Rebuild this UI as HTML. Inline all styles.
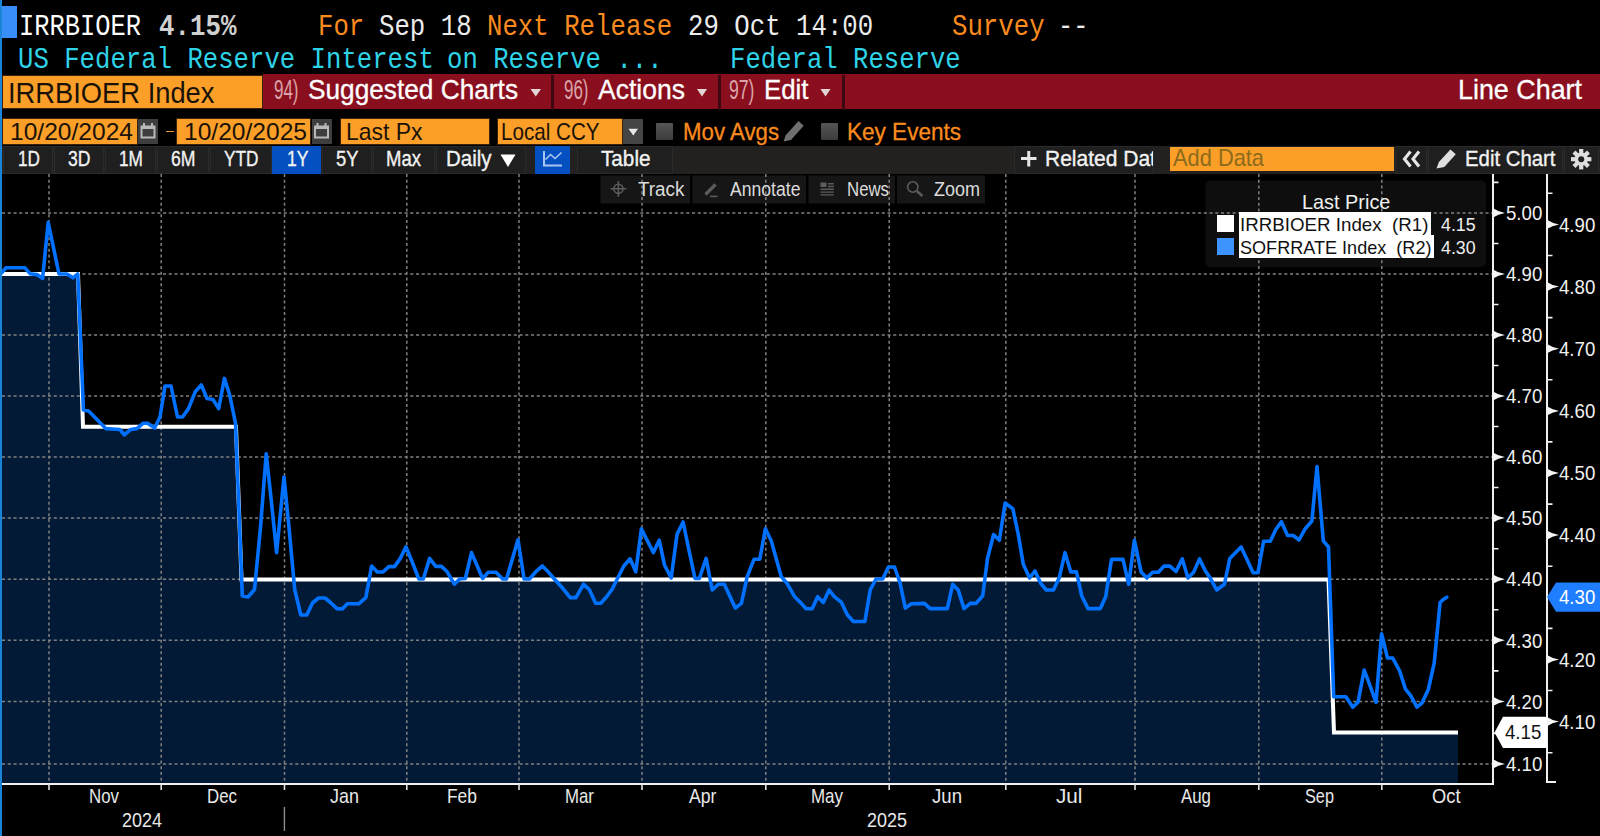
<!DOCTYPE html>
<html lang="en"><head><meta charset="utf-8"><title>IRRBIOER Index - Line Chart</title>
<style>
html,body{margin:0;padding:0;background:#000;}
body{width:1600px;height:836px;overflow:hidden;position:relative;font-family:"Liberation Sans", Arial, sans-serif;}
.abs,.t,.chart{position:absolute;}
.t{white-space:pre;line-height:1;transform-origin:0 0;}
.ts{font-family:"Liberation Sans", Arial, sans-serif;}
.tm{font-family:"Liberation Mono", monospace;}
.chart{left:0;top:0;}
.or{background:#fb9f28;box-shadow:0 0 0 1px #3c2206;}
.sep{background:#3d0810;width:3px;top:75px;height:35px;}
.gbox{background:#3e3e3e;}
.cb{background:linear-gradient(#555,#3c3c3c);width:17px;height:17px;border-radius:1px;}
.btn{background:#1f1f1f;box-shadow:inset 0 0 0 1px #2b2b2b;top:146px;height:28px;}
.cbtn{background:#161616;top:175.5px;height:28px;}
</style></head><body>
<!-- chart -->
<svg class="chart" width="1600" height="836" viewBox="0 0 1600 836">
<path d="M0.0,274.0 L78.0,274.0 L83.0,426.8 L236.0,426.8 L241.5,579.4 L1328.5,579.4 L1334.0,732.6 L1458.0,732.6 L1458.0,783.0 L0.0,783.0 Z" fill="#021a35"/>
<rect x="1205.5" y="180.5" width="280.5" height="86.5" rx="5" fill="#0e0e0e"/>
<g fill="#161616"><rect x="600.5" y="175.5" width="89.5" height="28"/><rect x="692.5" y="175.5" width="113.5" height="28"/><rect x="808.5" y="175.5" width="86.5" height="28"/><rect x="897" y="175.5" width="88" height="28"/></g>
<path d="M2,212.9 H1493 M2,274.0 H1493 M2,335.0 H1493 M2,396.0 H1493 M2,457.0 H1493 M2,518.0 H1493 M2,579.2 H1493 M2,640.2 H1493 M2,701.4 H1493 M2,763.9 H1493 M49.0,174 V783 M161.2,174 V783 M284.5,174 V783 M406.8,174 V783 M519.0,174 V783 M642.0,174 V783 M765.8,174 V783 M889.2,174 V783 M1005.8,174 V783 M1135.0,174 V783 M1258.8,174 V783 M1381.8,174 V783" stroke="#808080" stroke-width="1.5" stroke-dasharray="3.1 2.65" fill="none"/>
<path d="M0.0,274.0 L78.0,274.0 L83.0,426.8 L236.0,426.8 L241.5,579.4 L1328.5,579.4 L1334.0,732.6 L1458.0,732.6" stroke="#fff" stroke-width="4" fill="none" stroke-linejoin="miter"/>
<path d="M0.0,274.6 L6.0,267.8 L25.0,267.8 L30.0,273.7 L37.0,274.6 L42.6,278.4 L48.2,222.4 L59.0,274.0 L67.0,274.0 L73.0,277.8 L77.8,274.0 L83.4,410.0 L88.6,411.0 L105.8,428.6 L119.8,429.5 L124.4,434.8 L130.6,429.5 L136.9,428.6 L143.0,423.3 L147.7,423.3 L154.6,428.0 L160.0,417.0 L165.0,386.0 L171.0,386.0 L177.5,417.0 L182.5,417.0 L188.5,408.6 L195.2,391.8 L201.3,385.0 L207.0,398.5 L213.0,399.5 L218.7,408.6 L224.4,378.4 L229.7,395.0 L235.6,423.7 L242.3,596.0 L248.0,597.0 L254.5,589.5 L260.5,527.5 L266.2,453.8 L271.3,500.7 L276.6,552.6 L284.0,477.0 L289.0,527.5 L294.7,589.5 L300.8,615.0 L306.8,615.0 L312.5,603.0 L318.5,598.0 L325.0,598.0 L331.0,603.0 L337.0,608.6 L342.3,609.0 L347.3,603.7 L359.0,603.7 L365.8,597.6 L368.7,582.3 L371.6,566.0 L377.3,572.0 L383.0,572.0 L388.8,566.6 L394.5,566.6 L400.3,558.4 L406.0,546.9 L411.8,561.0 L418.9,579.0 L423.3,579.0 L429.6,558.4 L435.7,566.4 L441.4,566.4 L447.2,571.8 L454.3,584.2 L459.6,579.0 L465.4,578.5 L471.5,552.6 L476.8,565.0 L482.6,578.5 L488.3,572.3 L496.0,572.3 L502.7,579.0 L506.5,579.0 L518.0,539.8 L524.1,579.0 L529.5,579.0 L536.7,570.8 L542.4,566.0 L548.2,571.8 L553.9,578.5 L562.5,588.0 L570.2,597.6 L575.9,597.6 L583.6,584.2 L589.3,589.6 L595.6,603.3 L600.8,603.3 L606.6,596.7 L612.3,589.0 L618.0,577.5 L623.8,566.0 L630.1,558.8 L635.8,571.8 L641.4,528.7 L647.1,540.2 L653.4,552.6 L659.2,540.2 L664.5,565.0 L671.2,578.0 L677.0,534.4 L683.1,522.0 L688.9,549.8 L695.0,578.5 L699.4,578.5 L706.1,558.4 L712.2,590.0 L718.5,584.2 L724.3,584.2 L735.3,608.1 L741.4,603.3 L747.2,576.6 L754.0,559.3 L759.8,559.3 L765.4,528.7 L771.3,541.1 L781.2,576.6 L787.0,583.3 L794.6,596.7 L800.4,602.4 L806.1,608.7 L812.2,608.7 L817.6,596.7 L823.3,602.4 L829.1,590.0 L834.3,596.7 L841.5,602.4 L847.3,614.8 L853.4,621.5 L864.9,621.5 L870.2,590.0 L876.0,579.0 L882.7,579.0 L888.4,567.0 L894.5,567.0 L899.9,582.3 L905.3,608.1 L911.4,603.7 L924.4,603.4 L930.1,608.6 L947.3,608.6 L952.7,584.3 L958.2,590.0 L964.0,608.6 L970.3,603.4 L976.0,603.4 L982.7,595.8 L987.5,558.5 L993.6,534.5 L999.4,540.3 L1005.1,503.0 L1012.8,508.7 L1018.1,533.6 L1023.3,564.2 L1029.6,578.0 L1035.0,570.9 L1040.7,583.3 L1046.3,590.0 L1053.5,590.0 L1059.3,577.6 L1065.0,552.7 L1070.8,571.9 L1076.5,571.9 L1081.7,595.8 L1088.0,608.6 L1100.4,608.6 L1105.7,596.7 L1111.5,559.4 L1123.0,559.4 L1128.7,584.3 L1134.4,540.3 L1141.1,571.9 L1146.9,578.0 L1152.6,572.2 L1158.4,572.2 L1164.1,566.1 L1169.9,566.1 L1176.0,571.5 L1182.3,558.9 L1188.0,578.0 L1193.8,571.9 L1199.5,558.9 L1205.3,570.9 L1210.0,577.6 L1216.7,590.0 L1224.4,584.3 L1229.8,558.5 L1241.1,547.0 L1247.0,559.4 L1253.1,572.8 L1257.9,572.8 L1263.6,541.2 L1270.3,541.2 L1275.7,529.8 L1281.4,521.7 L1287.6,535.5 L1293.3,535.5 L1299.0,540.0 L1305.0,529.0 L1311.9,521.0 L1317.0,466.6 L1323.3,540.8 L1328.5,547.0 L1333.7,696.8 L1345.9,696.8 L1352.8,707.2 L1358.0,702.3 L1364.2,670.0 L1370.0,685.7 L1376.0,702.3 L1381.6,633.7 L1387.5,658.0 L1392.7,658.0 L1399.6,670.8 L1405.5,689.2 L1411.0,696.0 L1416.9,707.2 L1422.0,703.0 L1428.4,689.2 L1434.2,663.2 L1440.1,602.5 L1442.9,599.7 L1446.8,597.2" stroke="#0070ff" stroke-width="3.6" fill="none" stroke-linejoin="round" stroke-linecap="round"/>
<path d="M0,784 H1494 M1493,174 V785 M1547,174 V782 H1556" stroke="#f0f0f0" stroke-width="2" fill="none"/>
<path d="M49.0,784 V790 M161.2,784 V790 M284.5,784 V790 M406.8,784 V790 M519.0,784 V790 M642.0,784 V790 M765.8,784 V790 M889.2,784 V790 M1005.8,784 V790 M1135.0,784 V790 M1258.8,784 V790 M1381.8,784 V790" stroke="#e0e0e0" stroke-width="1.6"/>
<path d="M284.4,807 V831" stroke="#8a8a8a" stroke-width="1.4"/>
<path d="M1493,182.4 H1498.5 M1493,243.5 H1498.5 M1493,304.5 H1498.5 M1493,365.5 H1498.5 M1493,426.5 H1498.5 M1493,487.5 H1498.5 M1493,548.7 H1498.5 M1493,609.7 H1498.5 M1493,670.9 H1498.5 M1493,733.4 H1498.5 M1547,193.3 H1552.5 M1547,255.5 H1552.5 M1547,317.6 H1552.5 M1547,379.8 H1552.5 M1547,441.9 H1552.5 M1547,504.1 H1552.5 M1547,566.2 H1552.5 M1547,628.4 H1552.5 M1547,690.5 H1552.5 M1547,752.7 H1552.5" stroke="#f0f0f0" stroke-width="1.6"/>
<path d="M1493,208.3 Q1498,211.7 1505,212.9 Q1498,214.1 1493,217.5 Z M1493,269.4 Q1498,272.8 1505,274.0 Q1498,275.2 1493,278.6 Z M1493,330.4 Q1498,333.8 1505,335.0 Q1498,336.2 1493,339.6 Z M1493,391.4 Q1498,394.8 1505,396.0 Q1498,397.2 1493,400.6 Z M1493,452.4 Q1498,455.8 1505,457.0 Q1498,458.2 1493,461.6 Z M1493,513.4 Q1498,516.8 1505,518.0 Q1498,519.2 1493,522.6 Z M1493,574.6 Q1498,578.0 1505,579.2 Q1498,580.4 1493,583.8 Z M1493,635.6 Q1498,639.0 1505,640.2 Q1498,641.5 1493,644.9 Z M1493,696.8 Q1498,700.2 1505,701.4 Q1498,702.6 1493,706.0 Z M1493,759.3 Q1498,762.7 1505,763.9 Q1498,765.1 1493,768.5 Z M1547,219.8 Q1552,223.2 1559,224.4 Q1552,225.6 1547,229.0 Z M1547,281.9 Q1552,285.4 1559,286.6 Q1552,287.8 1547,291.2 Z M1547,344.1 Q1552,347.5 1559,348.7 Q1552,349.9 1547,353.3 Z M1547,406.2 Q1552,409.7 1559,410.9 Q1552,412.1 1547,415.5 Z M1547,468.4 Q1552,471.8 1559,473.0 Q1552,474.2 1547,477.6 Z M1547,530.5 Q1552,533.9 1559,535.1 Q1552,536.4 1547,539.8 Z M1547,654.9 Q1552,658.2 1559,659.5 Q1552,660.7 1547,664.1 Z M1547,717.0 Q1552,720.4 1559,721.6 Q1552,722.8 1547,726.2 Z" fill="#f4f4f4"/>
<path d="M1547,597 L1556,582.5 H1600 V611.7 H1556 Z" fill="#1f7dff"/>
<path d="M1494.5,732.5 L1503,716.7 H1545.5 Q1547,716.7 1547,718.2 V746.5 Q1547,748 1545.5,748 H1503 Z" fill="#fff"/>
</svg>
<!-- left window edge + cursor block -->
<div class="abs" style="left:0;top:0;width:2px;height:836px;background:#1b84d9"></div>
<div class="abs" style="left:2px;top:6px;width:14.5px;height:32px;background:#3a8ef8"></div>
<!-- red command bar -->
<div class="abs" style="left:262.5px;top:74.2px;width:1337.5px;height:35.3px;background:#8a0f1e"></div>
<div class="abs or" style="left:3px;top:76px;width:258.5px;height:31.5px"></div>
<div class="abs sep" style="left:551px"></div><div class="abs sep" style="left:717.5px"></div><div class="abs sep" style="left:841.5px"></div>
<svg class="abs" style="left:0;top:0" width="1600" height="180" viewBox="0 0 1600 180">
<path d="M530.5,89 h10.5 l-5.25,7.5z M697,89 h10 l-5,7.5z M820.5,89 h10 l-5,7.5z" fill="#e2d5d6"/>
</svg>
<!-- row 4 inputs -->
<div class="abs or" style="left:3px;top:118.7px;width:133.5px;height:25.3px"></div>
<div class="abs gbox" style="left:138px;top:119px;width:20px;height:25px"></div>
<div class="abs" style="left:165.5px;top:130.7px;width:8px;height:1.8px;background:#f0962a"></div>
<div class="abs or" style="left:176.5px;top:118.7px;width:133.5px;height:25.3px"></div>
<div class="abs gbox" style="left:311.5px;top:119px;width:20px;height:25px"></div>
<div class="abs or" style="left:341px;top:118.7px;width:147.5px;height:25.3px"></div>
<div class="abs or" style="left:498px;top:118.7px;width:124px;height:25.3px"></div>
<div class="abs gbox" style="left:623px;top:119px;width:20px;height:25px;background:#454545"></div>
<div class="abs cb" style="left:656px;top:122.5px"></div>
<div class="abs cb" style="left:820.5px;top:122.5px"></div>
<svg class="abs" style="left:0;top:110px" width="1600" height="40" viewBox="0 110 1600 40">
<g fill="none" stroke="#b8b8b8" stroke-width="2"><rect x="141.5" y="126.5" width="13" height="11"/><path d="M144,123 v4 M152,123 v4"/><rect x="315" y="126.5" width="13" height="11"/><path d="M317.5,123 v4 M325.5,123 v4"/></g>
<path d="M141,126 h14 v3 h-14z M314.5,126 h14 v3 h-14z" fill="#b8b8b8"/>
<path d="M628.5,128.8 h9.5 l-4.75,6.6z" fill="#e8e8e8"/>
<path d="M783.5,141.5 l2.2,-6.2 l12.8,-14.2 l5.2,4.6 l-12.8,14.2 z" fill="#6f6f6f"/>
</svg>
<!-- toolbar row 5 -->
<div class="abs" style="left:2px;top:145.5px;width:1598px;height:28.5px;background:#232120"></div>
<div class="abs btn" style="left:3px;width:50px"></div>
<div class="abs btn" style="left:54px;width:50px"></div>
<div class="abs btn" style="left:105px;width:51px"></div>
<div class="abs btn" style="left:157px;width:51.5px"></div>
<div class="abs btn" style="left:209.5px;width:62px"></div>
<div class="abs btn" style="left:272px;width:49px;background:#0450c1;box-shadow:none"></div>
<div class="abs btn" style="left:322px;width:50px"></div>
<div class="abs btn" style="left:373px;width:62px"></div>
<div class="abs btn" style="left:436px;width:89.5px"></div>
<div class="abs btn" style="left:535px;width:35px;background:#0450c1;box-shadow:none"></div>
<div class="abs btn" style="left:577px;width:96px"></div>
<div class="abs btn" style="left:1014px;width:139.5px"></div>
<div class="abs" style="left:1169.5px;top:147px;width:224px;height:24px;background:#fb9f28"></div>
<div class="abs btn" style="left:1395px;width:32px"></div>
<div class="abs btn" style="left:1428px;width:134.5px"></div>
<div class="abs btn" style="left:1563.5px;width:35.5px"></div>
<div class="abs" style="left:1044.5px;top:146px;width:108.5px;height:28px;overflow:hidden"><span class="t ts" style="left:0;top:1.9px;font-size:22px;color:#f2f2f2;-webkit-text-stroke:0.35px #f2f2f2;transform:scaleX(0.955)">Related Data</span></div>
<svg class="abs" style="left:0;top:140px" width="1600" height="40" viewBox="0 140 1600 40">
<path d="M500.5,154.5 h15 l-7.5,12.5z" fill="#fff"/>
<path d="M544,151 V165.5 H562" fill="none" stroke="#a9c6f2" stroke-width="2"/>
<path d="M545.5,159.5 L550.5,154.5 L555,158.5 L561.5,152.5" fill="none" stroke="#a9c6f2" stroke-width="1.6"/>
<path d="M1021,158.5 h15.5 M1028.75,151 v15.5" stroke="#e6e6e6" stroke-width="3" fill="none"/>
<path d="M1410.5,151.5 l-6,7.5 l6,7.5 M1419,151.5 l-6,7.5 l6,7.5" stroke="#e6e6e6" stroke-width="3.1" fill="none"/>
<path d="M1436.5,168.5 l2.4,-6.4 l11.5,-12.6 l5.4,4.8 l-11.5,12.6 z" fill="#dedede"/>
<g transform="translate(1581.2,159.2)" fill="#dedede"><circle r="6.6"/><rect x="-2.1" y="-10.2" width="4.2" height="20.4" transform="rotate(0)"/><rect x="-2.1" y="-10.2" width="4.2" height="20.4" transform="rotate(45)"/><rect x="-2.1" y="-10.2" width="4.2" height="20.4" transform="rotate(90)"/><rect x="-2.1" y="-10.2" width="4.2" height="20.4" transform="rotate(135)"/><circle r="3" fill="#1f1f1f"/></g>
</svg>
<!-- chart toolbar -->
<svg class="abs" style="left:0;top:170px" width="1600" height="40" viewBox="0 170 1600 40">
<g stroke="#5c5c5c" stroke-width="1.6" fill="none"><circle cx="618.4" cy="188.8" r="4.6"/><path d="M610.5,188.8 h15.8 M618.4,181 v15.8"/>
<path d="M705.5,194.5 l10,-10" stroke-width="3.2"/><path d="M710,196.4 h7.6"/>
<circle cx="912.8" cy="187" r="5.2"/><path d="M916.8,191 l5.6,5" stroke-width="2.6"/></g>
<path d="M820.5,182.5 h6 v4.5 h-6z M828,183 h5.8 v1.4 h-5.8z M828,185.8 h5.8 v1.4 h-5.8z M820.5,188.6 h13.3 v1.4 h-13.3z M820.5,191.4 h13.3 v1.4 h-13.3z M820.5,194.2 h13.3 v1.4 h-13.3z" fill="#5c5c5c"/>
</svg>
<!-- legend -->
<div class="abs" style="left:1216.5px;top:214.7px;width:17.3px;height:17.2px;background:#fff"></div>
<div class="abs" style="left:1216.5px;top:237.6px;width:17.3px;height:17.2px;background:#3d94ff"></div>
<div class="abs" style="left:1239px;top:212px;width:192px;height:22.8px;background:#fff"></div>
<div class="abs" style="left:1239px;top:234.8px;width:195px;height:22.8px;background:#fff"></div>
<!-- text -->
<span class="t tm" style="left:19.2px;top:12.0px;font-size:30.3px;color:#fff;transform:scaleX(0.839);">IRRBIOER</span>
<span class="t tm" style="left:159.0px;top:12.0px;font-size:30.3px;color:#d0d0d0;transform:scaleX(0.852);font-weight:bold;">4.15%</span>
<span class="t tm" style="left:317.5px;top:12.0px;font-size:30.3px;color:#fb8b1e;transform:scaleX(0.849);">For</span>
<span class="t tm" style="left:379.3px;top:12.0px;font-size:30.3px;color:#ececec;transform:scaleX(0.849);">Sep 18</span>
<span class="t tm" style="left:487.3px;top:12.0px;font-size:30.3px;color:#fb8b1e;transform:scaleX(0.849);">Next Release</span>
<span class="t tm" style="left:688.1px;top:12.0px;font-size:30.3px;color:#ececec;transform:scaleX(0.849);">29 Oct 14:00</span>
<span class="t tm" style="left:951.5px;top:12.0px;font-size:30.3px;color:#fb8b1e;transform:scaleX(0.849);">Survey</span>
<span class="t tm" style="left:1058.0px;top:12.0px;font-size:30.3px;color:#ececec;transform:scaleX(0.836);">--</span>
<span class="t tm" style="left:18.2px;top:45.0px;font-size:30.3px;color:#2fd3e8;transform:scaleX(0.847);">US Federal Reserve Interest</span>
<span class="t tm" style="left:447.2px;top:45.0px;font-size:30.3px;color:#2fd3e8;transform:scaleX(0.847);">on Reserve ...</span>
<span class="t tm" style="left:730.0px;top:45.0px;font-size:30.3px;color:#2fd3e8;transform:scaleX(0.846);">Federal Reserve</span>
<span class="t ts" style="left:7.8px;top:78.8px;font-size:29px;color:#1a1208;transform:scaleX(0.942);">IRRBIOER Index</span>
<span class="t ts" style="left:273.5px;top:76.2px;font-size:28px;color:#dba3a9;transform:scaleX(0.605);">94)</span>
<span class="t ts" style="left:308.0px;top:76.2px;font-size:28px;color:#fff;transform:scaleX(0.937);-webkit-text-stroke:0.3px #fff;">Suggested Charts</span>
<span class="t ts" style="left:563.5px;top:76.2px;font-size:28px;color:#dba3a9;transform:scaleX(0.605);">96)</span>
<span class="t ts" style="left:597.5px;top:76.2px;font-size:28px;color:#fff;transform:scaleX(0.947);-webkit-text-stroke:0.3px #fff;">Actions</span>
<span class="t ts" style="left:728.5px;top:76.2px;font-size:28px;color:#dba3a9;transform:scaleX(0.630);">97)</span>
<span class="t ts" style="left:763.5px;top:76.2px;font-size:28px;color:#fff;transform:scaleX(0.922);-webkit-text-stroke:0.3px #fff;">Edit</span>
<span class="t ts" style="left:1457.5px;top:76.2px;font-size:28px;color:#fff;transform:scaleX(0.960);-webkit-text-stroke:0.3px #fff;">Line Chart</span>
<span class="t ts" style="left:9.8px;top:119.6px;font-size:24px;color:#1a1208;transform:scaleX(1.024);">10/20/2024</span>
<span class="t ts" style="left:184.3px;top:119.6px;font-size:24px;color:#1a1208;transform:scaleX(1.024);">10/20/2025</span>
<span class="t ts" style="left:345.5px;top:119.6px;font-size:24px;color:#1a1208;transform:scaleX(0.956);">Last Px</span>
<span class="t ts" style="left:501.0px;top:119.6px;font-size:24px;color:#1a1208;transform:scaleX(0.859);">Local CCY</span>
<span class="t ts" style="left:682.5px;top:119.6px;font-size:24px;color:#fb8b1e;transform:scaleX(0.927);-webkit-text-stroke:0.3px #fb8b1e;">Mov Avgs</span>
<span class="t ts" style="left:847.0px;top:119.6px;font-size:24px;color:#fb8b1e;transform:scaleX(0.939);-webkit-text-stroke:0.3px #fb8b1e;">Key Events</span>
<span class="t ts" style="left:17.5px;top:147.9px;font-size:22px;color:#f2f2f2;transform:scaleX(0.782);-webkit-text-stroke:0.35px #f2f2f2;">1D</span>
<span class="t ts" style="left:67.5px;top:147.9px;font-size:22px;color:#f2f2f2;transform:scaleX(0.800);-webkit-text-stroke:0.35px #f2f2f2;">3D</span>
<span class="t ts" style="left:119.0px;top:147.9px;font-size:22px;color:#f2f2f2;transform:scaleX(0.785);-webkit-text-stroke:0.35px #f2f2f2;">1M</span>
<span class="t ts" style="left:171.0px;top:147.9px;font-size:22px;color:#f2f2f2;transform:scaleX(0.802);-webkit-text-stroke:0.35px #f2f2f2;">6M</span>
<span class="t ts" style="left:223.5px;top:147.9px;font-size:22px;color:#f2f2f2;transform:scaleX(0.784);-webkit-text-stroke:0.35px #f2f2f2;">YTD</span>
<span class="t ts" style="left:287.0px;top:147.9px;font-size:22px;color:#f2f2f2;transform:scaleX(0.799);-webkit-text-stroke:0.35px #f2f2f2;">1Y</span>
<span class="t ts" style="left:335.5px;top:147.9px;font-size:22px;color:#f2f2f2;transform:scaleX(0.836);-webkit-text-stroke:0.35px #f2f2f2;">5Y</span>
<span class="t ts" style="left:386.0px;top:147.9px;font-size:22px;color:#f2f2f2;transform:scaleX(0.842);-webkit-text-stroke:0.35px #f2f2f2;">Max</span>
<span class="t ts" style="left:445.5px;top:147.9px;font-size:22px;color:#f2f2f2;transform:scaleX(0.931);-webkit-text-stroke:0.35px #f2f2f2;">Daily</span>
<span class="t ts" style="left:600.5px;top:147.9px;font-size:22px;color:#f2f2f2;transform:scaleX(0.941);-webkit-text-stroke:0.35px #f2f2f2;">Table</span>
<span class="t ts" style="left:1464.5px;top:147.9px;font-size:22px;color:#f2f2f2;transform:scaleX(0.925);-webkit-text-stroke:0.35px #f2f2f2;">Edit Chart</span>
<span class="t ts" style="left:1172.5px;top:147.1px;font-size:23.6px;color:#8c6a1c;transform:scaleX(0.925);">Add Data</span>
<span class="t ts" style="left:638.0px;top:178.6px;font-size:20px;color:#dcdcdc;transform:scaleX(0.944);">Track</span>
<span class="t ts" style="left:730.0px;top:178.6px;font-size:20px;color:#dcdcdc;transform:scaleX(0.880);">Annotate</span>
<span class="t ts" style="left:847.0px;top:178.6px;font-size:20px;color:#dcdcdc;transform:scaleX(0.840);">News</span>
<span class="t ts" style="left:933.5px;top:178.6px;font-size:20px;color:#dcdcdc;transform:scaleX(0.900);">Zoom</span>
<span class="t ts" style="left:1302.0px;top:192.4px;font-size:20.3px;color:#f0f0f0;transform:scaleX(0.980);">Last Price</span>
<span class="t ts" style="left:1240.3px;top:215.6px;font-size:18.5px;color:#111;transform:scaleX(1.013);">IRRBIOER Index  (R1)</span>
<span class="t ts" style="left:1240.3px;top:238.5px;font-size:18.5px;color:#111;transform:scaleX(0.977);">SOFRRATE Index  (R2)</span>
<span class="t ts" style="left:1441.0px;top:215.6px;font-size:18.5px;color:#f0f0f0;transform:scaleX(0.961);">4.15</span>
<span class="t ts" style="left:1441.0px;top:238.5px;font-size:18.5px;color:#f0f0f0;transform:scaleX(0.961);">4.30</span>
<span class="t ts" style="left:1505.6px;top:203.1px;font-size:20.8px;color:#f0f0f0;transform:scaleX(0.897);">5.00</span>
<span class="t ts" style="left:1505.6px;top:264.2px;font-size:20.8px;color:#f0f0f0;transform:scaleX(0.897);">4.90</span>
<span class="t ts" style="left:1505.6px;top:325.2px;font-size:20.8px;color:#f0f0f0;transform:scaleX(0.897);">4.80</span>
<span class="t ts" style="left:1505.6px;top:386.2px;font-size:20.8px;color:#f0f0f0;transform:scaleX(0.897);">4.70</span>
<span class="t ts" style="left:1505.6px;top:447.2px;font-size:20.8px;color:#f0f0f0;transform:scaleX(0.897);">4.60</span>
<span class="t ts" style="left:1505.6px;top:508.2px;font-size:20.8px;color:#f0f0f0;transform:scaleX(0.897);">4.50</span>
<span class="t ts" style="left:1505.6px;top:569.4px;font-size:20.8px;color:#f0f0f0;transform:scaleX(0.897);">4.40</span>
<span class="t ts" style="left:1505.6px;top:630.5px;font-size:20.8px;color:#f0f0f0;transform:scaleX(0.897);">4.30</span>
<span class="t ts" style="left:1505.6px;top:691.6px;font-size:20.8px;color:#f0f0f0;transform:scaleX(0.897);">4.20</span>
<span class="t ts" style="left:1505.6px;top:754.1px;font-size:20.8px;color:#f0f0f0;transform:scaleX(0.897);">4.10</span>
<span class="t ts" style="left:1559.4px;top:214.6px;font-size:20.8px;color:#f0f0f0;transform:scaleX(0.897);">4.90</span>
<span class="t ts" style="left:1559.4px;top:276.8px;font-size:20.8px;color:#f0f0f0;transform:scaleX(0.897);">4.80</span>
<span class="t ts" style="left:1559.4px;top:338.9px;font-size:20.8px;color:#f0f0f0;transform:scaleX(0.897);">4.70</span>
<span class="t ts" style="left:1559.4px;top:401.1px;font-size:20.8px;color:#f0f0f0;transform:scaleX(0.897);">4.60</span>
<span class="t ts" style="left:1559.4px;top:463.2px;font-size:20.8px;color:#f0f0f0;transform:scaleX(0.897);">4.50</span>
<span class="t ts" style="left:1559.4px;top:525.4px;font-size:20.8px;color:#f0f0f0;transform:scaleX(0.897);">4.40</span>
<span class="t ts" style="left:1559.4px;top:649.7px;font-size:20.8px;color:#f0f0f0;transform:scaleX(0.897);">4.20</span>
<span class="t ts" style="left:1559.4px;top:711.8px;font-size:20.8px;color:#f0f0f0;transform:scaleX(0.897);">4.10</span>
<span class="t ts" style="left:1558.8px;top:586.9px;font-size:20.8px;color:#fff;transform:scaleX(0.897);">4.30</span>
<span class="t ts" style="left:1505.0px;top:721.9px;font-size:20.8px;color:#111;transform:scaleX(0.897);">4.15</span>
<span class="t ts" style="left:89.1px;top:787.2px;font-size:19.8px;color:#e8e8e8;transform:scaleX(0.852);">Nov</span>
<span class="t ts" style="left:206.9px;top:787.2px;font-size:19.8px;color:#e8e8e8;transform:scaleX(0.852);">Dec</span>
<span class="t ts" style="left:330.1px;top:787.2px;font-size:19.8px;color:#e8e8e8;transform:scaleX(0.908);">Jan</span>
<span class="t ts" style="left:446.9px;top:787.2px;font-size:19.8px;color:#e8e8e8;transform:scaleX(0.879);">Feb</span>
<span class="t ts" style="left:565.0px;top:787.2px;font-size:19.8px;color:#e8e8e8;transform:scaleX(0.850);">Mar</span>
<span class="t ts" style="left:689.1px;top:787.2px;font-size:19.8px;color:#e8e8e8;transform:scaleX(0.892);">Apr</span>
<span class="t ts" style="left:810.5px;top:787.2px;font-size:19.8px;color:#e8e8e8;transform:scaleX(0.855);">May</span>
<span class="t ts" style="left:931.5px;top:787.2px;font-size:19.8px;color:#e8e8e8;transform:scaleX(0.940);">Jun</span>
<span class="t ts" style="left:1056.1px;top:787.2px;font-size:19.8px;color:#e8e8e8;transform:scaleX(1.047);">Jul</span>
<span class="t ts" style="left:1180.9px;top:787.2px;font-size:19.8px;color:#e8e8e8;transform:scaleX(0.852);">Aug</span>
<span class="t ts" style="left:1304.8px;top:787.2px;font-size:19.8px;color:#e8e8e8;transform:scaleX(0.823);">Sep</span>
<span class="t ts" style="left:1431.5px;top:787.2px;font-size:19.8px;color:#e8e8e8;transform:scaleX(0.925);">Oct</span>
<span class="t ts" style="left:122.0px;top:809.8px;font-size:20.5px;color:#e8e8e8;transform:scaleX(0.877);">2024</span>
<span class="t ts" style="left:866.8px;top:809.8px;font-size:20.5px;color:#e8e8e8;transform:scaleX(0.877);">2025</span>
</body></html>
